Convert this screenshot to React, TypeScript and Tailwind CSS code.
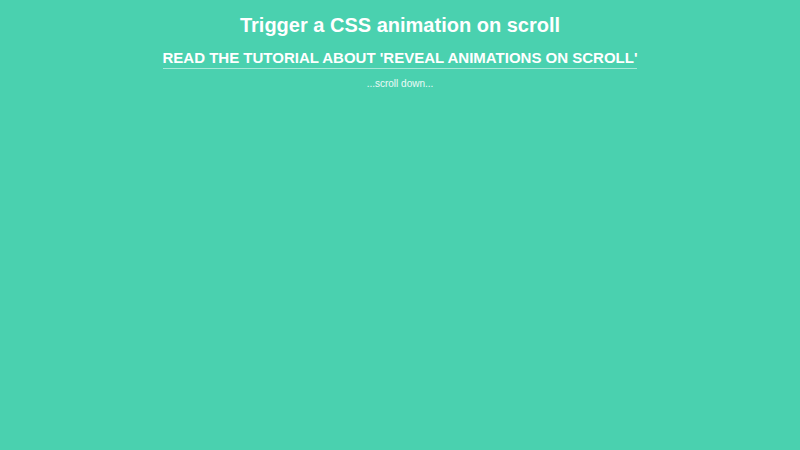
import React from "react";

export default function App() {
  return (
    <div
      className="min-h-[450px] w-full bg-[#4ad1af] text-white text-center"
      style={{ fontFamily: '"Liberation Sans", Arial, sans-serif' }}
    >
      <h1 className="pt-[13px] text-[20px] font-bold leading-[24px]">
        Trigger a CSS animation on scroll
      </h1>
      <div className="mt-[9px]">
        <a
          href="#"
          className="inline-block text-[15px] font-bold uppercase leading-[18px] pb-[1px] border-b border-white/50"
        >
          Read the tutorial about 'Reveal animations on scroll'
        </a>
      </div>
      <p className="mt-[8px] text-[10px] leading-[12px] text-white/90">...scroll down...</p>
    </div>
  );
}
